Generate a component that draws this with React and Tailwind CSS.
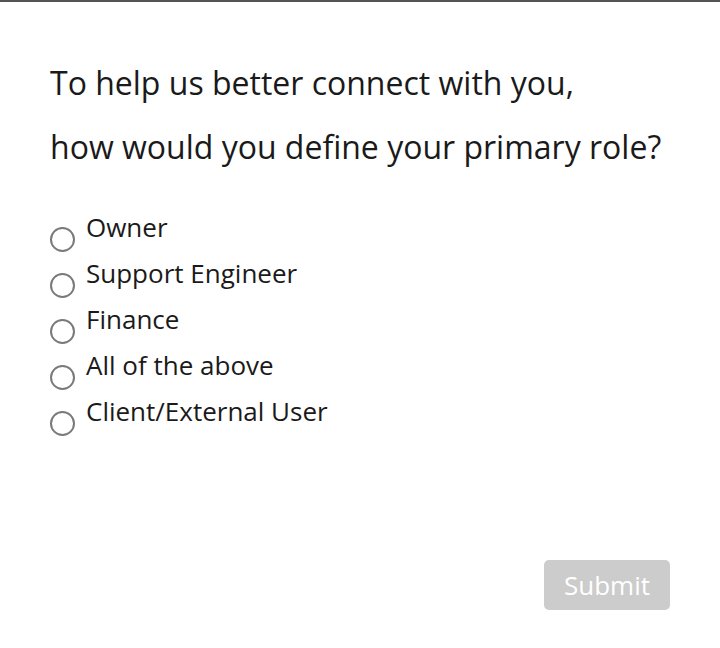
import { useState } from 'react';

const roles = ['Owner', 'Support Engineer', 'Finance', 'All of the above', 'Client/External User'];

export default function App() {
  const [role, setRole] = useState(null);

  return (
    <div className="w-[720px] h-[648px] bg-white border-t-2 border-[#555555] font-['Open_Sans',sans-serif] text-[#1a1a1a] flex flex-col">
      <div className="pl-[50px] pt-[49px]">
        <h1 className="text-[32px] leading-[64px] font-normal">
          To help us better connect with you,
          <br />
          how would you define your primary role?
        </h1>
        <div className="mt-[33px] flex flex-col">
          {roles.map((r) => (
            <label key={r} className="flex items-start gap-[11px] h-[46px] cursor-pointer">
              <span className="mt-[15px] w-[25px] h-[25px] rounded-full border-2 border-[#7a7a7a] bg-white flex items-center justify-center">
                {role === r && <span className="w-[12px] h-[12px] rounded-full bg-[#555]" />}
              </span>
              <input type="radio" name="role" className="hidden" checked={role === r} onChange={() => setRole(r)} />
              <span className="text-[26px] leading-[30px]">{r}</span>
            </label>
          ))}
        </div>
      </div>
      <div className="mt-auto flex justify-end pr-[50px] pb-[38px]">
        <button disabled={!role} className="w-[126px] h-[50px] rounded-[5px] bg-[#cccccc] text-white text-[26px] leading-[50px]">
          Submit
        </button>
      </div>
    </div>
  );
}
